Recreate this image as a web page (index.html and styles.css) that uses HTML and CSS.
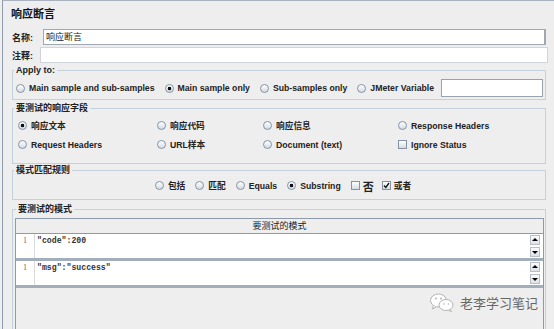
FILE: index.html
```html
<!doctype html>
<html lang="zh">
<head>
  <meta charset="utf-8">
  <title>响应断言</title>
  <link rel="stylesheet" href="styles.css">
</head>
<body>
  <div class="panel">
    <div class="title">响应断言</div>

    <!-- name / comment -->
    <div class="field field-name">
      <span class="field-label">名称:</span>
      <div class="input">响应断言</div>
    </div>
    <div class="field field-comment">
      <span class="field-label">注释:</span>
      <div class="input input-light"></div>
    </div>

    <!-- APPLY TO -->
    <fieldset class="group group-apply">
      <legend>Apply to:</legend>
      <div class="row">
        <span class="opt"><span class="radio"></span>Main sample and sub-samples</span>
        <span class="opt"><span class="radio on"></span>Main sample only</span>
        <span class="opt"><span class="radio"></span>Sub-samples only</span>
        <span class="opt"><span class="radio"></span>JMeter Variable</span>
        <div class="input var-input"></div>
      </div>
    </fieldset>

    <!-- FIELD TO TEST -->
    <fieldset class="group group-fields">
      <legend>要测试的响应字段</legend>
      <div class="grid">
        <span class="opt"><span class="radio on"></span>响应文本</span>
        <span class="opt"><span class="radio"></span>响应代码</span>
        <span class="opt"><span class="radio"></span>响应信息</span>
        <span class="opt"><span class="radio"></span>Response Headers</span>
        <span class="opt"><span class="radio"></span>Request Headers</span>
        <span class="opt"><span class="radio"></span>URL样本</span>
        <span class="opt"><span class="radio"></span>Document (text)</span>
        <span class="opt"><span class="check"></span>Ignore Status</span>
      </div>
    </fieldset>

    <!-- MATCHING RULES -->
    <fieldset class="group group-rule">
      <legend>模式匹配规则</legend>
      <div class="row row-center">
        <span class="opt"><span class="radio"></span>包括</span>
        <span class="opt"><span class="radio"></span>匹配</span>
        <span class="opt"><span class="radio"></span>Equals</span>
        <span class="opt"><span class="radio on"></span>Substring</span>
        <span class="opt opt-check"><span class="check"></span><span class="big">否</span></span>
        <span class="opt opt-check"><span class="check on"><svg width="7" height="7" viewBox="0 0 7 7"><path d="M1 3.5l1.8 2L6 1" fill="none" stroke="#111" stroke-width="1.3"/></svg></span>或者</span>
      </div>
    </fieldset>

    <!-- PATTERNS TO TEST -->
    <fieldset class="group group-pattern">
      <legend>要测试的模式</legend>
      <div class="table">
        <div class="thead">要测试的模式</div>
        <div class="cell">
          <span class="gutter">1</span>
          <span class="code">"code":200</span>
          <div class="scroll">
            <span class="btn"><svg width="8" height="8" viewBox="0 0 8 8"><path d="M1 5h6L4 2z"/></svg></span>
            <span class="btn"><svg width="8" height="8" viewBox="0 0 8 8"><path d="M1 3h6L4 6z"/></svg></span>
          </div>
        </div>
        <div class="cell">
          <span class="gutter">1</span>
          <span class="code">"msg":"success"</span>
          <div class="scroll">
            <span class="btn"><svg width="8" height="8" viewBox="0 0 8 8"><path d="M1 5h6L4 2z"/></svg></span>
            <span class="btn"><svg width="8" height="8" viewBox="0 0 8 8"><path d="M1 3h6L4 6z"/></svg></span>
          </div>
        </div>
      </div>
    </fieldset>

    <!-- watermark over the table -->
    <div class="watermark">
      <svg width="26" height="19" viewBox="0 0 26 19">
        <ellipse cx="9.5" cy="7.5" rx="8" ry="6.5" fill="#fff" stroke="#b4b4b4"/>
        <path d="M4.5 12.5l-1 3.5 3.5-2" fill="#fff" stroke="#b4b4b4"/>
        <ellipse cx="17" cy="12" rx="7" ry="5.5" fill="#fff" stroke="#b4b4b4"/>
        <path d="M21 16.5l1.5 2-3-1" fill="#fff" stroke="#b4b4b4"/>
        <circle cx="7" cy="5.5" r="1" fill="#b4b4b4"/>
        <circle cx="12" cy="5.5" r="1" fill="#b4b4b4"/>
        <circle cx="15" cy="11" r="0.8" fill="#b4b4b4"/>
        <circle cx="19.5" cy="11" r="0.8" fill="#b4b4b4"/>
      </svg>
      <span>老李学习笔记</span>
    </div>
  </div>
</body>
</html>
```

FILE: styles.css
```css
/*----------------------------------------------
 * BASE
 *----------------------------------------------*/
* { box-sizing: border-box; }

html, body {
  margin: 0;
  padding: 0;
}

body {
  width: 554px;
  height: 329px;
  overflow: hidden;
  background: #eeeeee;
  font-family: "Liberation Sans", "Noto Sans CJK SC", sans-serif;
  font-size: 9px;
  color: #222;
}

/* main panel with the thin frame on the left and top */
.panel {
  position: relative;
  height: 329px;
  margin-left: 2px;
  border-left: 1px solid #8d9bae;
  border-top: 1px solid #a9b3bf;
}

.title {
  height: 26px;
  line-height: 27px;
  padding-left: 8px;
  font-size: 11px;
  font-weight: bold;
  color: #111;
}

/*----------------------------------------------
 * NAME / COMMENT
 *----------------------------------------------*/
.field {
  display: flex;
  align-items: center;
  height: 16px;
  margin-top: 2px;
  padding-left: 9px;
}

.field-label {
  width: 31px;
  font-weight: bold;
}

.field-name { margin-right: 8px; }
.field-comment { margin-right: 6px; }
.field-comment .field-label { width: 28px; }

.input {
  flex: 1;
  height: 16px;
  line-height: 14px;
  padding: 0 2px;
  background: #fff;
  border: 1px solid #a0a8b2;
  border-right-width: 2px;
}

.input-light {
  border: 1px solid #cfd5db;
}

/*----------------------------------------------
 * TITLED GROUPS
 *----------------------------------------------*/
.group {
  min-width: 0;
  margin: 2px 8px 0 9px;
  padding: 0;
  border: 1px solid #c4d0dc;
}

.group legend {
  height: 10px;
  margin-left: 1px;
  padding: 0 2px;
  line-height: 10px;
  font-weight: bold;
}

.row {
  display: flex;
  align-items: center;
  height: 20px;
  padding-left: 3px;
}

.opt {
  display: flex;
  align-items: center;
  gap: 4px;
  margin-right: 10px;
  font-size: 8.7px;
  font-weight: bold;
  white-space: nowrap;
}

.radio {
  flex: none;
  width: 9px;
  height: 9px;
  border-radius: 50%;
  border: 1px solid #8593a3;
  background: linear-gradient(#ffffff, #d3dbe4);
}

.radio.on {
  background: radial-gradient(circle, #111 0 1.6px, transparent 2.1px), linear-gradient(#ffffff, #d3dbe4);
}

.check {
  flex: none;
  display: flex;
  align-items: center;
  justify-content: center;
  width: 9px;
  height: 9px;
  border: 1px solid #8593a3;
  background: linear-gradient(#ffffff, #d3dbe4);
}

.group-apply {
  padding: 3px 0 1px;
}

.var-input {
  height: 18px;
  margin-left: -3px;
  margin-right: 2px;
  border: 1px solid #9aa3ad;
}

.group-fields {
  margin-top: 3px;
}

.grid {
  display: grid;
  grid-template-columns: 139px 106px 135px 1fr;
  grid-auto-rows: 19px;
  align-items: center;
  padding: 3px 0 9px 5px;
}

.group-rule {
  margin-top: 1px;
  padding: 1px 0 4px;
}

.row-center {
  justify-content: center;
  height: 19px;
  padding-left: 8px;
}

.opt-check { gap: 3px; margin-right: 8px; }
.opt-check:last-child { margin-right: 0; }
.big { font-size: 11px; }

/*----------------------------------------------
 * PATTERN TABLE
 *----------------------------------------------*/
.group-pattern {
  height: 125px;
  margin-top: 4px;
  padding: 4px 1px 0 2px;
  border-bottom: none;
}

.table {
  height: 111px;
  border: 1px solid #8e9aa8;
  border-bottom: none;
}

.thead {
  height: 15px;
  line-height: 14px;
  text-align: center;
  border-bottom: 1px solid #8e9aa8;
  color: #222;
}

.cell {
  display: flex;
  height: 27px;
  background: #fff;
  border-bottom: 3px solid #a3aebb;
}

.gutter {
  width: 19px;
  padding-top: 1px;
  line-height: 12px;
  text-align: center;
  border-right: 1px solid #dcdcdc;
  font-family: "Liberation Serif", serif;
  font-size: 8px;
  color: #666;
}

.code {
  flex: 1;
  padding: 1px 0 0 2px;
  line-height: 12px;
  font-family: "Liberation Mono", monospace;
  font-size: 8.2px;
  font-weight: bold;
  color: #333;
}

.scroll {
  display: flex;
  flex-direction: column;
  gap: 2px;
  padding: 1px 3px 0 0;
}

.btn {
  display: flex;
  align-items: center;
  justify-content: center;
  width: 10px;
  height: 10px;
  border: 1px solid #b7bec6;
  background: linear-gradient(#fafafa, #dde2e7);
}

/*----------------------------------------------
 * WATERMARK
 *----------------------------------------------*/
.watermark {
  position: absolute;
  left: 426px;
  top: 292px;
  display: flex;
  align-items: center;
  gap: 5px;
  font-size: 13px;
  color: #666;
}
```
